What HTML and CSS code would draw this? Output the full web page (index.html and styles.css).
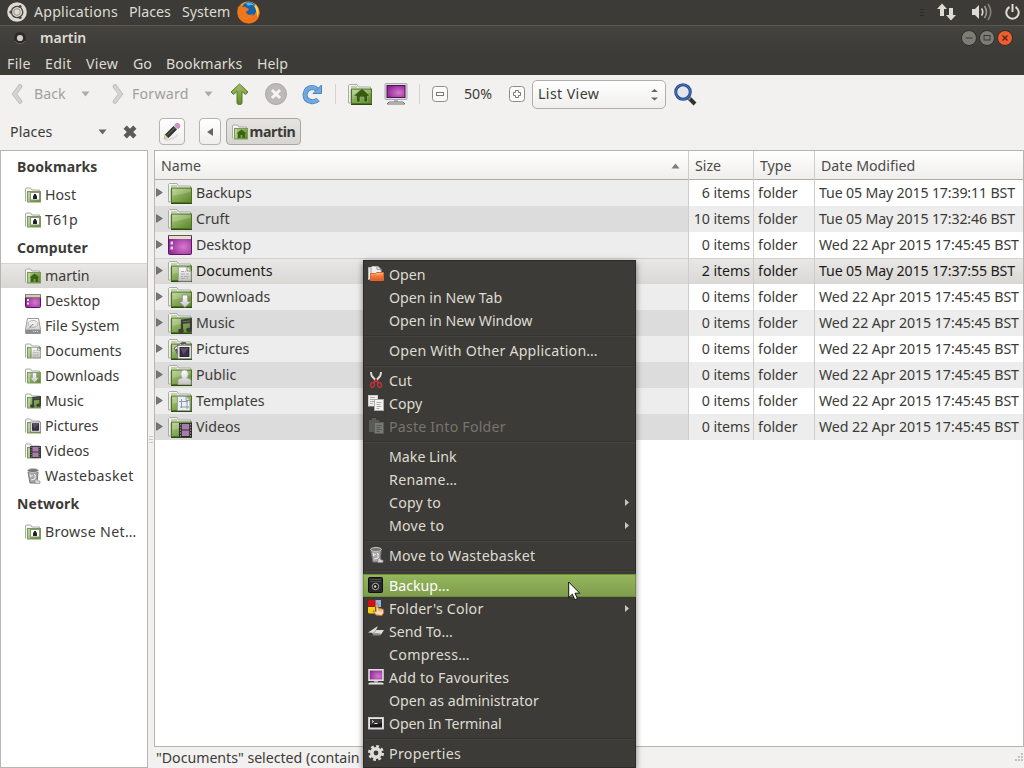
FILE: index.html
```html
<!DOCTYPE html>
<html lang="en">
<head>
<meta charset="utf-8">
<title>martin</title>
<link rel="stylesheet" href="styles.css">
</head>
<body>
<svg class="defs" width="0" height="0" aria-hidden="true">
  <defs>
    <linearGradient id="gGreen" x1="0" y1="0" x2="1" y2="1"><stop offset="0" stop-color="#b4cf86"/><stop offset=".5" stop-color="#83a754"/><stop offset="1" stop-color="#5a8528"/></linearGradient>
    <linearGradient id="gArrow" x1="0" y1="0" x2="0" y2="1"><stop offset="0" stop-color="#a5bf6b"/><stop offset="1" stop-color="#5d8c23"/></linearGradient>
    <radialGradient id="gPurple" cx=".65" cy=".6" r=".7"><stop offset="0" stop-color="#d879cd"/><stop offset="1" stop-color="#8a2492"/></radialGradient>
    <linearGradient id="gGrey" x1="0" y1="0" x2="0" y2="1"><stop offset="0" stop-color="#fff"/><stop offset="1" stop-color="#c4c4c4"/></linearGradient>
    <linearGradient id="gOrange" x1="0" y1="0" x2="0" y2="1"><stop offset="0" stop-color="#f7c39c"/><stop offset=".4" stop-color="#ef8143"/><stop offset="1" stop-color="#e4581c"/></linearGradient>
    <radialGradient id="gFox" cx=".4" cy=".3" r=".8"><stop offset="0" stop-color="#ffc43a"/><stop offset=".55" stop-color="#f5871f"/><stop offset="1" stop-color="#d8331a"/></radialGradient>
  </defs>
  <symbol id="folder24" viewBox="0 0 24 24">
    <path d="M.5 21V3.500l1-1H9l1.500 2.500H22.500V8H3v13z" fill="#f2f2f0" stroke="#a9aba6"/>
    <path d="M3 5h6" stroke="#91b45f"/>
    <rect x="3.500" y="7" width="20" height="14.500" fill="url(#gGreen)" stroke="#4c7420"/>
    <path d="M4.500 8h18v3C15 12 10 14 4.500 15z" fill="#fff" opacity=".2"/>
    <path d="M3 22.500h21" stroke="#2f4b10"/>
  </symbol>
  <symbol id="folder16" viewBox="0 0 16 16">
    <path d="M.5 14.500V1.500l.5-.5h4.500L7 3h7.500v3" fill="#f4f4f2" stroke="#a9aba6"/>
    <rect x="2.500" y="4.500" width="13" height="10.500" fill="url(#gGreen)" stroke="#7c9a57"/>
    <path d="M4 5.500v9" stroke="#d6e3c1"/>
  </symbol>
  <symbol id="netfolder" viewBox="0 0 16 16"><use href="#folder16"/><rect x="5.500" y="5.500" width="9" height="7.500" fill="#fafafa" stroke="#8a947c"/><path d="M8 8.500h1V7h2v1.500h1V12H8z" fill="#222"/></symbol>
  <symbol id="home16" viewBox="0 0 16 16"><use href="#folder16"/><path d="M4.500 9.500L9.500 5.500l5 4H13V14h-2.500v-3H8.500v3H6V9.500z" fill="#3b6017"/></symbol>
  <symbol id="home24" viewBox="0 0 24 24"><use href="#folder24"/><path d="M5.500 14L14 6.500l8 7.500h-2.500v6H16v-5h-4v5H8.500v-6z" fill="#355a12" stroke="#9bb873" stroke-width=".6"/></symbol>
  <symbol id="desk24" viewBox="0 0 24 24"><rect x=".5" y="2.500" width="23" height="19" rx="1" fill="url(#gPurple)" stroke="#611268"/><rect x="1" y="3" width="22" height="3" fill="#e2dfc8"/><path d="M0 2.500h24" stroke="#5f5c49"/><rect x="2.500" y="8.500" width="2.500" height="3" fill="#ddd"/><rect x="2.500" y="13.500" width="2.500" height="3" fill="#ddd"/></symbol>
  <symbol id="desk16" viewBox="0 0 16 16"><rect x=".5" y="2" width="15" height="12.500" rx="1" fill="url(#gPurple)" stroke="#611268"/><rect x=".5" y="1.500" width="15" height="3" fill="#d0ceb5" stroke="#77745f" stroke-width=".7"/><rect x="2" y="6" width="2" height="2" fill="#eee"/><rect x="2" y="9.500" width="2" height="2" fill="#eee"/></symbol>
  <symbol id="eDoc" viewBox="0 0 14 15"><path d="M.5.500h8.500l4 4v10H.5z" fill="url(#gGrey)" stroke="#a9a9a9"/><path d="M9 .5v4h4" fill="#eee" stroke="#888"/><path d="M3 5h3M7 5h1M3 7.500h4m1 0h3M3 10h2m1 0h5M3 12h4m1 0h2" stroke="#aaa"/></symbol>
  <symbol id="eDown" viewBox="0 0 14 15"><path d="M4 1h6v7h3.500L7 14.500.5 8H4z" fill="url(#gGrey)" stroke="#8b8b8b"/></symbol>
  <symbol id="eMusic" viewBox="0 0 14 15"><path d="M4 12V2l9-1v10M4 4.500l9-1" fill="none" stroke="#3b3d3c" stroke-width="2.200"/><ellipse cx="3" cy="12.500" rx="2.800" ry="2.200" fill="#3b3d3c"/><ellipse cx="11" cy="11.500" rx="2.800" ry="2.200" fill="#3b3d3c"/></symbol>
  <symbol id="ePic" viewBox="0 0 14 15"><rect x=".7" y="1.200" width="12.600" height="12.600" fill="#f8f8f8" stroke="#777" stroke-width=".8"/><rect x="2.800" y="3.300" width="8.400" height="8.400" fill="#3a304b" stroke="#111" stroke-width=".8"/><path d="M3 3.500h8l-5 6z" fill="#73668c" opacity=".6"/></symbol>
  <symbol id="eUser" viewBox="0 0 14 15"><path d="M1 14.500V11q0-2 4-2.500Q3.500 7 3.500 4.500 3.500 1 7 1t3.500 3.500Q10.500 7 9 8.500q4 .5 4 2.500v3.500z" fill="url(#gGrey)" stroke="#aaa" stroke-width=".8"/></symbol>
  <symbol id="eTemplate" viewBox="0 0 14 15"><path d="M.5.500h8.500l4 4v10H.5z" fill="#edf0f2" stroke="#9aa3ab"/><path d="M4.500 3v9M10 6v7M2 5.500h9M3 11h9M9 .5v4h4" fill="none" stroke="#8e9aa8"/></symbol>
  <symbol id="eFilm" viewBox="0 0 14 15"><rect x="0" y="0" width="14" height="15" fill="#29262b"/><rect x="3" y="1" width="8" height="6" fill="#a87caa"/><rect x="3" y="8" width="8" height="6" fill="#a87caa"/><path d="M1.500 1v14M12.500 1v14" stroke="#aaa" stroke-dasharray="1.500 1.500"/></symbol>
  <symbol id="disk" viewBox="0 0 16 16"><path d="M2.500.500h11l2 11v4H.5v-4z" fill="url(#gGrey)" stroke="#999"/><ellipse cx="8" cy="6" rx="5" ry="3.500" fill="none" stroke="#b5b5b5"/><path d="M8 6L4 10.500" stroke="#888"/><rect x="1" y="11.500" width="14" height="4" fill="#8c8c8c"/><path d="M8 13.500h5" stroke="#ddd" stroke-dasharray="1 1"/></symbol>
  <symbol id="trash" viewBox="0 0 16 16"><path d="M3 4h10l-1 11H5z" fill="#a5a5a5" stroke="#777"/><ellipse cx="8" cy="2.500" rx="5.500" ry="2" fill="#777" stroke="#c4c4c4"/><path d="M5 6l1 3m-1 0l3-2m2 0v4M6 12l4-1M9 6l2 2" stroke="#eee" fill="none"/><path d="M10 15.500V12l2-1 1 2h2v2.500z" fill="#d5d5d5" stroke="#888" stroke-width=".6"/></symbol>
  <symbol id="monitor" viewBox="0 0 24 24"><rect x="1" y="1.500" width="22" height="16" rx="1" fill="#dcdcdc" stroke="#aaa"/><rect x="3" y="3.500" width="18" height="12" fill="url(#gPurple)" stroke="#4f1259"/><path d="M10 18h4v3h-4z" fill="#bbb"/><path d="M3 22l2-2h14l2 2z" fill="#eee" stroke="#6e6e6e"/></symbol>
  <symbol id="monitor16" viewBox="0 0 16 16"><rect x="1" y=".8" width="14" height="10.400" fill="url(#gPurple)" stroke="#dedede" stroke-width="1.600"/><path d="M6 12h4v1.500H6z" fill="#aaa"/><path d="M.5 15.500v-1.300l1.500-.7h12l1.500.7v1.300z" fill="#e6e6e6"/></symbol>
  <symbol id="openIc" viewBox="0 0 16 16"><path d="M.5 14V1.500H3l1-1h6l3 3V7" fill="#eee" stroke="#bbb"/><path d="M3 2v10M9 .5v3h4" stroke="#999" fill="none"/><path d="M2.500 7.500h5l1-1h7v8h-13z" fill="url(#gOrange)" stroke="#e0642b"/></symbol>
  <symbol id="cutIc" viewBox="0 0 16 16"><path d="M2.800 0L3.800 4 8.700 9.500M13.200 0l-1 4-4.900 5.500" fill="none" stroke="#dededa" stroke-width="1.900"/><path d="M5.500 10.500L8 8l2.500 2.500" fill="none" stroke="#b82d36" stroke-width="2"/><ellipse cx="4.500" cy="13" rx="1.900" ry="2.400" transform="rotate(20 4.500 13)" fill="none" stroke="#c1333a" stroke-width="1.500"/><ellipse cx="11.500" cy="13" rx="1.900" ry="2.400" transform="rotate(-20 11.500 13)" fill="none" stroke="#c1333a" stroke-width="1.500"/></symbol>
  <symbol id="copyIc" viewBox="0 0 16 16"><rect x=".5" y=".5" width="9" height="10.500" fill="#f3f3f1" stroke="#ccc"/><path d="M2 2.500h5M2 4.500h4M2 6.500h4M2 8.500h3" stroke="#aaa"/><rect x="6.500" y="4.500" width="9" height="11" fill="#f5f5f3" stroke="#aaa"/><path d="M8.500 7.500h5M8.500 9.500h4M8.500 11.500h5M8.500 13.500h3" stroke="#aaa"/></symbol>
  <symbol id="pasteIc" viewBox="0 0 16 16"><path d="M1 2h3V0h4v2h3v12H1z" fill="#5a5a56"/><rect x="6.500" y="4.500" width="9" height="11" fill="#797976" stroke="#5a5a56"/><path d="M8.500 7.500h5M8.500 9.500h4M8.500 11.500h5M8.500 13.500h3" stroke="#555"/></symbol>
  <symbol id="safe" viewBox="0 0 16 16"><rect x=".5" y=".5" width="14" height="15" rx="1" fill="#282828" stroke="#0e0e0e"/><path d="M2 2.500h11M2 4.500h11" stroke="#4b4b4b"/><circle cx="7.500" cy="9.500" r="3.200" fill="#111" stroke="#b5b5b5"/><circle cx="7.200" cy="9.500" r="1.200" fill="#ddd"/></symbol>
  <symbol id="colorIc" viewBox="0 0 16 16"><path d="M1 0h6v6.500H0V1z" fill="#d80f10"/><path d="M7.500 0H13v7H7.500z" fill="#8fb5e6"/><path d="M0 7h7v6.500H1l-1-1z" fill="#f4d211"/><path d="M8 15l-3-4h1.500L8 12V4h2v4l4.500 1 1 1v3l-1.500 2.500z" fill="#f6dcb9" stroke="#bd7730"/><path d="M11 9v2m2-1.500v2" stroke="#bd7730" stroke-width=".8"/></symbol>
  <symbol id="sendIc" viewBox="0 0 16 16"><path d="M0 9.500L10 3 8 7h8l-3 4.500H5.500L4 9.800z" fill="#deded9"/><path d="M8.500 7L5 10.300l7.500.5" stroke="#999" fill="none"/><path d="M4.500 12h8" stroke="#8b8b86"/></symbol>
  <symbol id="termIc" viewBox="0 0 16 16"><rect x=".5" y="2.500" width="15" height="11.500" fill="#e4e4e2" stroke="#ccc"/><rect x="2" y="4" width="12" height="8.500" fill="#171717"/><path d="M2 4h12v4L2 10z" fill="#4a4a4a" opacity=".7"/><path d="M4 5.500L5.500 6.500 4 7.500M6.500 8.500h3" stroke="#eee" fill="none"/></symbol>
  <symbol id="gear" viewBox="0 0 16 16"><circle cx="8" cy="8" r="6.600" fill="none" stroke="#dededb" stroke-width="2.800" stroke-dasharray="2.800 2.380"/><circle cx="8" cy="8" r="4.200" fill="#3c3b37" stroke="#dededb" stroke-width="3.600"/></symbol>
  <symbol id="tri" viewBox="0 0 9 6"><path d="M.5.500h8L4.500 5.500z"/></symbol>
  <symbol id="exp" viewBox="0 0 7 9"><path d="M.5.700L6.300 4.500.5 8.300z" fill="#777" stroke="#5f5f5f" stroke-width=".8"/></symbol>
  <symbol id="sub" viewBox="0 0 4 7"><path d="M0 0l4 3.500L0 7z" fill="#c8c7c1"/></symbol>
</svg>

<header class="panel">
  <svg class="distro" viewBox="0 0 20 20"><circle cx="10" cy="10" r="9.800" fill="#dfdbd2"/><circle cx="10" cy="10" r="5.600" fill="none" stroke="#45443f" stroke-width="1.300" stroke-dasharray="10 1.730" transform="rotate(67 10 10)"/><circle cx="3.800" cy="10" r="1.500" fill="#45443f"/><circle cx="13.100" cy="4.600" r="1.500" fill="#45443f"/><circle cx="13.100" cy="15.400" r="1.500" fill="#45443f"/><circle cx="10" cy="10" r="3.300" fill="none" stroke="#77756f" stroke-width=".8"/></svg>
  <span class="p-app">Applications</span><span class="p-places">Places</span><span class="p-system">System</span>
  <svg class="fox" viewBox="0 0 23 23"><circle cx="11.500" cy="11.500" r="11" fill="url(#gFox)"/><circle cx="12" cy="8.500" r="7.500" fill="#1563b0"/><path d="M9 2q5-2 9 3-4-2-7 0z" fill="#48b7e8"/><path d="M1 6q2-1 3-3l1 3q3-1 5 1l2 1q-1 2-3 2.500 0 2 2 3 3 1 5-1 0 4-4 5-5 0-7-3Q6 22 15 19q5-2 5-9l-1-5q4 3 3.500 8-1.500 9-11 9.500Q1 21 .5 12q0-4 .5-6z" fill="#f0761c"/><path d="M19 4q5 6 1 12 0-7-3-11z" fill="#ffd646"/></svg>
  <div class="tray">
    <i class="grip"><b></b><b></b><b></b></i>
    <svg class="net" viewBox="0 0 19 18"><path d="M5 .5L10 6H7v7H3V6H0zM14 17.500L9 12h3V5h4v7h3z" fill="#dfdbd2"/></svg>
    <svg class="vol" viewBox="0 0 21 18"><path d="M0 6h3l4-4v14l-4-4H0z" fill="#dfdbd2"/><g fill="none" stroke="#dfdbd2" stroke-width="1.600"><path d="M9.500 5.500q2.500 3.500 0 7"/><path d="M12.500 3q4 6 0 12" opacity=".6"/><path d="M16 1q5.500 8 0 16" opacity=".45"/></g></svg>
    <svg class="pow" viewBox="0 0 15 16"><path d="M4.500 3A6.200 6.200 0 1 0 10.500 3" fill="none" stroke="#dfdbd2" stroke-width="2"/><path d="M7.500 0v8" stroke="#dfdbd2" stroke-width="2"/></svg>
  </div>
</header>

<div class="titlebar">
  <svg class="winicon" viewBox="0 0 14 14"><circle cx="7" cy="7" r="6" fill="#2b2a27"/><path d="M2 10a6 6 0 0 0 10 0" fill="none" stroke="#67665f"/><circle cx="7" cy="7" r="3.100" fill="#cfcdc6"/></svg>
  <span class="wintitle">martin</span>
  <div class="winbtns">
    <svg viewBox="0 0 16 16"><circle cx="8" cy="8" r="7.500" fill="#7d7c75" stroke="#302f2c"/><path d="M4.500 8h7" stroke="#3a3935"/></svg>
    <svg viewBox="0 0 16 16"><circle cx="8" cy="8" r="7.500" fill="#7d7c75" stroke="#302f2c"/><rect x="5" y="5.500" width="6" height="4.500" fill="none" stroke="#3a3935"/></svg>
    <svg viewBox="0 0 16 16"><circle cx="8" cy="8" r="7.500" fill="#ee5d2d" stroke="#302f2c"/><path d="M5.500 5.500l5 5m0-5l-5 5" stroke="#55230f" stroke-width="1.300"/></svg>
  </div>
</div>

<nav class="menubar"><span class="m-file">File</span><span class="m-edit">Edit</span><span class="m-view">View</span><span class="m-go">Go</span><span class="m-bm">Bookmarks</span><span class="m-help">Help</span></nav>

<div class="toolbar">
  <svg class="chev" viewBox="0 0 12 20"><path d="M9 2.500L3.500 10 9 17.500" fill="none" stroke="#b9bab6" stroke-width="4.500" stroke-linecap="round"/><path d="M9 2.500L3.500 10 9 17.500" fill="none" stroke="#d3d4d1" stroke-width="3" stroke-linecap="round"/></svg>
  <span class="t-back">Back</span><svg class="tri pale"><use href="#tri"/></svg>
  <svg class="chev fwd" viewBox="0 0 12 20"><path d="M3 2.500L8.500 10 3 17.500" fill="none" stroke="#b9bab6" stroke-width="4.500" stroke-linecap="round"/><path d="M3 2.500L8.500 10 3 17.500" fill="none" stroke="#d3d4d1" stroke-width="3" stroke-linecap="round"/></svg>
  <span class="t-fwd">Forward</span><svg class="tri pale"><use href="#tri"/></svg>
  <svg class="up" viewBox="0 0 19 22"><path d="M9.500 1l8.500 8-2.500 2.500-3.500-3V20q0 1.500-2.500 1.500T7 20V8.500l-3.500 3L1 9z" fill="url(#gArrow)" stroke="#557c25"/></svg>
  <svg class="stop" viewBox="0 0 22 22"><circle cx="11" cy="11" r="10.500" fill="#bdb9b9" stroke="#aaa6a6"/><path d="M7 7l8 8m0-8l-8 8" stroke="#f5f4f4" stroke-width="3"/></svg>
  <svg class="reload" viewBox="0 0 21 21"><path d="M16 15.500Q13 18.500 9 17.500 3 16.500 3 10.500 4 4 10 3.500q3 0 5 2" fill="none" stroke="#4c82bd" stroke-width="5"/><path d="M16 15.500Q13 18.500 9 17.500 3 16.500 3 10.500 4 4 10 3.500q3 0 5 2" fill="none" stroke="#70a9df" stroke-width="3.300"/><path d="M19.500 1v8.500H11L13.500 7l3-3z" fill="#70a9df" stroke="#4c82bd"/></svg>
  <i class="sep"></i>
  <svg class="i24 homebtn"><use href="#home24"/></svg>
  <svg class="i24 pcbtn"><use href="#monitor"/></svg>
  <i class="sep s2"></i>
  <svg class="zoomer" viewBox="0 0 16 16"><rect x=".5" y=".5" width="15" height="15" rx="3" fill="#fafafa" stroke="#8e8d89"/><rect x="4.500" y="6.500" width="7" height="3" fill="#fff" stroke="#777"/></svg>
  <span class="t-zoom">50%</span>
  <svg class="zoomer" viewBox="0 0 16 16"><rect x=".5" y=".5" width="15" height="15" rx="3" fill="#fafafa" stroke="#8e8d89"/><path d="M6.500 4.500h3v2h2v3h-2v2h-3v-2h-2v-3h2z" fill="#fff" stroke="#777"/></svg>
  <div class="select"><span class="t-list">List View</span><svg viewBox="0 0 7 13"><path d="M0 4L3.500 1 7 4zM0 9.500l3.500 3L7 9.500z" fill="#666"/></svg></div>
  <svg class="mag" viewBox="0 0 23 23"><path d="M14 14l7 7" stroke="#333" stroke-width="4"/><path d="M14 14l2 2" stroke="#aaa" stroke-width="3"/><circle cx="9" cy="9" r="7.300" fill="#e3e7ec" stroke="#25478b" stroke-width="3"/><circle cx="9" cy="9" r="7.300" fill="none" stroke="#557dc5" stroke-width="1"/></svg>
</div>

<div class="location">
  <span class="t-side">Places</span><svg class="tri dark"><use href="#tri"/></svg>
  <svg class="closeside" viewBox="0 0 13 13"><path d="M2 2l9 9m0-9l-9 9" stroke="#5b5a56" stroke-width="4.200"/></svg>
  <div class="btn pencil"><svg viewBox="0 0 18 18"><path d="M2 17q7 0 13-5" stroke="#ddd" stroke-width="2" fill="none"/><path d="M1 16l1-4.500L5 14.500z" fill="#e9e18b" stroke="#99975d" stroke-width=".5"/><path d="M2 11.500L10.500 3 14 6.500 5.500 15z" fill="#333"/><path d="M4 12.500L12 4.500" stroke="#777"/><path d="M10.500 3l1.300-1.300 3.500 3.500L14 6.500z" fill="#bbb"/><path d="M12 1.500Q14-.5 16 1t0 4l-.5.500z" fill="#e292cc" stroke="#a75e95" stroke-width=".5"/></svg></div>
  <div class="btn prev"><svg viewBox="0 0 6 8"><path d="M6 0v8L0 4z" fill="#666"/></svg></div>
  <div class="btn crumb"><svg class="i16"><use href="#home16"/></svg><b>martin</b></div>
</div>

<main class="body">
  <aside class="side">
    <h2>Bookmarks</h2>
    <p><svg><use href="#netfolder"/></svg><span>Host</span></p>
    <p><svg><use href="#netfolder"/></svg><span>T61p</span></p>
    <h2>Computer</h2>
    <p class="sel"><svg><use href="#home16"/></svg><span>martin</span></p>
    <p><svg><use href="#desk16"/></svg><span>Desktop</span></p>
    <p><svg><use href="#disk"/></svg><span>File System</span></p>
    <p><svg><use href="#folder16"/><use href="#eDoc" x="6" y="4" width="10" height="11"/></svg><span>Documents</span></p>
    <p><svg><use href="#folder16"/><use href="#eDown" x="4" y="4" width="11" height="11"/></svg><span>Downloads</span></p>
    <p><svg><use href="#folder16"/><use href="#eMusic" x="5" y="3" width="11" height="12"/></svg><span>Music</span></p>
    <p><svg><use href="#folder16"/><use href="#ePic" x="5" y="3" width="11" height="12"/></svg><span>Pictures</span></p>
    <p><svg><use href="#folder16"/><use href="#eFilm" x="5" y="3" width="11" height="12"/></svg><span>Videos</span></p>
    <p><svg><use href="#trash"/></svg><span class="airy">Wastebasket</span></p>
    <h2>Network</h2>
    <p><svg><use href="#netfolder"/></svg><span class="airy">Browse Net…</span></p>
  </aside>
  <div class="handle"><i></i><i></i><i></i></div>
  <section class="right">
    <div class="list">
      <div class="row head"><span class="c-name">Name<svg viewBox="0 0 9 6"><path d="M.5 5.500h8L4.500.500z" fill="#7d7d7d"/></svg></span><span>Size</span><span>Type</span><span>Date Modified</span></div>
      <div class="row"><div class="c-name"><svg class="exp"><use href="#exp"/></svg><svg class="i24"><use href="#folder24"/></svg><span>Backups</span></div><div class="c-size">6 items</div><div class="c-type">folder</div><div class="c-date tue">Tue 05 May 2015 17:39:11 BST</div></div>
      <div class="row"><div class="c-name"><svg class="exp"><use href="#exp"/></svg><svg class="i24"><use href="#folder24"/></svg><span>Cruft</span></div><div class="c-size">10 items</div><div class="c-type">folder</div><div class="c-date tue">Tue 05 May 2015 17:32:46 BST</div></div>
      <div class="row"><div class="c-name"><svg class="exp"><use href="#exp"/></svg><svg class="i24"><use href="#desk24"/></svg><span>Desktop</span></div><div class="c-size">0 items</div><div class="c-type">folder</div><div class="c-date">Wed 22 Apr 2015 17:45:45 BST</div></div>
      <div class="row chosen"><div class="c-name"><svg class="exp"><use href="#exp"/></svg><svg class="i24"><use href="#folder24"/><use href="#eDoc" x="10" y="7" width="14" height="16"/></svg><span>Documents</span></div><div class="c-size">2 items</div><div class="c-type">folder</div><div class="c-date tue">Tue 05 May 2015 17:37:55 BST</div></div>
      <div class="row"><div class="c-name"><svg class="exp"><use href="#exp"/></svg><svg class="i24"><use href="#folder24"/><use href="#eDown" x="10" y="9" width="14" height="14"/></svg><span>Downloads</span></div><div class="c-size">0 items</div><div class="c-type">folder</div><div class="c-date">Wed 22 Apr 2015 17:45:45 BST</div></div>
      <div class="row"><div class="c-name"><svg class="exp"><use href="#exp"/></svg><svg class="i24"><use href="#folder24"/><use href="#eMusic" x="10" y="7" width="14" height="16"/></svg><span>Music</span></div><div class="c-size">0 items</div><div class="c-type">folder</div><div class="c-date">Wed 22 Apr 2015 17:45:45 BST</div></div>
      <div class="row"><div class="c-name"><svg class="exp"><use href="#exp"/></svg><svg class="i24"><use href="#folder24"/><path d="M6 11l9-6 6 5-10 10z" fill="#eee" stroke="#666"/><path d="M8 12l3 5M13 7l5-1" stroke="#555" stroke-width="2"/><use href="#ePic" x="9" y="7" width="15" height="16"/></svg><span>Pictures</span></div><div class="c-size">0 items</div><div class="c-type">folder</div><div class="c-date">Wed 22 Apr 2015 17:45:45 BST</div></div>
      <div class="row"><div class="c-name"><svg class="exp"><use href="#exp"/></svg><svg class="i24"><use href="#folder24"/><use href="#eUser" x="9" y="6" width="15" height="16"/></svg><span>Public</span></div><div class="c-size">0 items</div><div class="c-type">folder</div><div class="c-date">Wed 22 Apr 2015 17:45:45 BST</div></div>
      <div class="row"><div class="c-name"><svg class="exp"><use href="#exp"/></svg><svg class="i24"><use href="#folder24"/><use href="#eTemplate" x="9" y="7" width="14" height="15"/></svg><span>Templates</span></div><div class="c-size">0 items</div><div class="c-type">folder</div><div class="c-date">Wed 22 Apr 2015 17:45:45 BST</div></div>
      <div class="row"><div class="c-name"><svg class="exp"><use href="#exp"/></svg><svg class="i24"><use href="#folder24"/><use href="#eFilm" x="11" y="7" width="13" height="16"/></svg><span>Videos</span></div><div class="c-size">0 items</div><div class="c-type">folder</div><div class="c-date">Wed 22 Apr 2015 17:45:45 BST</div></div>
    </div>
    <footer class="status"><span>"Documents" selected (contain</span><svg viewBox="0 0 12 12"><path d="M10 1v2M10 4v2M10 7v2M7 4v2M7 7v2M4 7v2" stroke="#c4c2bd" stroke-width="2"/></svg></footer>
  </section>
</main>

<div class="menu">
  <div class="mi"><svg><use href="#openIc"/></svg><span>Open</span></div>
  <div class="mi"><span>Open in New Tab</span></div>
  <div class="mi"><span>Open in New Window</span></div>
  <hr>
  <div class="mi"><span class="loose">Open With Other Application…</span></div>
  <hr>
  <div class="mi"><svg><use href="#cutIc"/></svg><span>Cut</span></div>
  <div class="mi"><svg><use href="#copyIc"/></svg><span>Copy</span></div>
  <div class="mi off"><svg><use href="#pasteIc"/></svg><span class="loose">Paste Into Folder</span></div>
  <hr>
  <div class="mi"><span>Make Link</span></div>
  <div class="mi"><span class="airy">Rename…</span></div>
  <div class="mi"><span class="loose">Copy to</span><svg class="sub"><use href="#sub"/></svg></div>
  <div class="mi"><span class="loose">Move to</span><svg class="sub"><use href="#sub"/></svg></div>
  <hr>
  <div class="mi"><svg><use href="#trash"/></svg><span class="loose">Move to Wastebasket</span></div>
  <hr>
  <div class="mi hot"><svg><use href="#safe"/></svg><span>Backup...</span></div>
  <div class="mi"><svg><use href="#colorIc"/></svg><span class="loose">Folder's Color</span><svg class="sub"><use href="#sub"/></svg></div>
  <div class="mi"><svg><use href="#sendIc"/></svg><span>Send To...</span></div>
  <div class="mi"><span class="airy">Compress…</span></div>
  <div class="mi"><svg><use href="#monitor16"/></svg><span class="loose">Add to Favourites</span></div>
  <div class="mi"><span>Open as administrator</span></div>
  <div class="mi"><svg><use href="#termIc"/></svg><span class="snug">Open In Terminal</span></div>
  <hr>
  <div class="mi"><svg><use href="#gear"/></svg><span class="airy">Properties</span></div>
</div>
<svg class="cursor" viewBox="0 0 13 20"><path d="M.7 1v15.500l3.600-3.300 2.500 5.500 2.700-1.200L7 12.200h4.800z" fill="#fff" stroke="#111"/></svg>
</body>
</html>
```
FILE: styles.css
```css
* { box-sizing: border-box; margin: 0; padding: 0; }
html, body { height: 768px; overflow: hidden; }
body {
  width: 1024px;
  display: flex;
  flex-direction: column;
  background: #f2f1f0;
  color: #3c3b37;
  font: 14.2px/20px "Noto Sans", sans-serif;
  white-space: nowrap;
}
svg { flex: none; display: block; }
span { flex: none; }
.defs { position: absolute; }
.i24 { width: 24px; height: 24px; }
.i16 { width: 16px; height: 16px; }
.airy { letter-spacing: .33px; }
.loose { letter-spacing: .2px; }
.snug { letter-spacing: -.2px; }

.panel {
  flex: none;
  height: 25px;
  display: flex;
  align-items: center;
  padding: 0 4px 1px 7px;
  background: #3c3b37;
  color: #dfdbd2;
}
.distro { width: 20px; height: 20px; margin-right: 7px; }
.p-app { width: 95px; letter-spacing: .2px; }
.p-places { width: 53px; }
.p-system { width: 55px; }
.fox { width: 23px; height: 23px; }
.tray { margin-left: auto; display: flex; align-items: center; }
.grip { width: 4px; display: grid; gap: 2px; margin-right: 13px; }
.grip b { height: 1px; background: #2b2a27; }
.net { width: 19px; height: 18px; margin-right: 16px; }
.vol { width: 21px; height: 18px; margin-right: 12px; }
.pow { width: 15px; height: 16px; }

.titlebar {
  flex: none;
  height: 26px;
  display: flex;
  align-items: center;
  padding: 0 11px 2px 13px;
  border-top: 1px solid #5a5853;
  background: linear-gradient(#45443f, #3c3b37);
  color: #dfdbd2;
}
.winicon { width: 14px; height: 14px; margin-right: 13px; }
.wintitle { font-weight: 600; font-size: 14px; }
.winbtns { margin-left: auto; display: flex; gap: 2px; }
.winbtns svg { width: 16px; height: 16px; }

.menubar {
  flex: none;
  height: 24px;
  display: flex;
  align-items: center;
  padding: 1px 0 0 7px;
  background: #3c3b37;
  color: #dfdbd2;
}
.m-file { width: 38px; letter-spacing: .3px; }
.m-edit { width: 41px; letter-spacing: .3px; }
.m-view { width: 47px; letter-spacing: .3px; }
.m-go { width: 33px; }
.m-bm { width: 91px; letter-spacing: .1px; }

.toolbar { flex: none; height: 38px; display: flex; align-items: center; padding-left: 11px; }
.chev { width: 12px; height: 20px; margin-right: 11px; }
.chev.fwd { margin: 0 8px 0 22px; }
.t-back, .t-fwd { color: #a09f9b; }
.t-back { width: 47px; }
.t-fwd { width: 72px; letter-spacing: .2px; }
.tri { width: 9px; height: 6px; }
.pale { fill: #acaba8; }
.dark { fill: #666; }
.up { width: 19px; height: 22px; margin: 0 16px 0 17px; }
.stop { width: 22px; height: 22px; margin-right: 15px; }
.reload { width: 21px; height: 21px; }
.sep { width: 1px; height: 20px; background: #d5d3d0; margin: 0 12px; }
.pcbtn { margin-left: 12px; }
.s2 { margin: 0 12px 0 11px; }
.zoomer { width: 16px; height: 16px; }
.t-zoom { width: 45px; margin-left: 16px; }
.select {
  width: 134px;
  height: 29px;
  margin: 0 8px 0 7px;
  padding: 0 7px 0 5px;
  display: flex;
  align-items: center;
  justify-content: space-between;
  border: 1px solid #b0aeaa;
  border-radius: 5px;
  background: linear-gradient(#fff, #f0efed);
}
.t-list { letter-spacing: .4px; }
.select svg { width: 7px; height: 13px; }
.mag { width: 23px; height: 23px; }

.location { flex: none; height: 37px; display: flex; align-items: center; padding-left: 10px; }
.t-side { width: 88px; letter-spacing: .1px; }
.closeside { width: 14px; height: 14px; margin: 0 22px 0 16px; }
.btn {
  height: 27px;
  display: flex;
  align-items: center;
  justify-content: center;
  border: 1px solid #b5b3af;
  border-radius: 4px;
  background: linear-gradient(#fff, #efeeec);
}
.pencil { width: 26px; margin-right: 14px; }
.pencil svg { width: 18px; height: 18px; }
.prev { width: 22px; margin-right: 5px; }
.prev svg { width: 6px; height: 8px; }
.crumb { width: 75px; gap: 2px; background: linear-gradient(#e6e4e1, #d8d6d2); border-color: #aaa7a2; }
.crumb b { letter-spacing: -.4px; padding-top: 1px; }

.body { flex: 1; min-height: 0; display: flex; }
.side { flex: none; width: 148px; border: 1px solid #b8b5ae; background: #fff; }
.side h2 { height: 31px; padding-left: 16px; font-size: 14px; line-height: 31px; letter-spacing: .1px; }
.side p { height: 25px; display: flex; align-items: center; gap: 4px; padding-left: 24px; }
.side p svg { width: 16px; height: 16px; }
.side .sel { background: linear-gradient(#e9e8e6, #d9d7d4); box-shadow: inset 0 1px #d6d4d0; }
.handle { flex: none; width: 6px; display: grid; align-content: start; gap: 2px; padding: 286px 1px 0 0; justify-items: center; }
.handle i { width: 4px; height: 1px; background: #c9c7c3; }
.right { flex: 1; display: flex; flex-direction: column; }
.list { height: 597px; border: 1px solid #b8b5ae; background: #fff; }
.row { display: grid; grid-template-columns: 533px 65px 61px 1fr; height: 26px; line-height: 26px; }
.row > * + * { border-left: 1px solid #cfcdca; }
.row .c-name { display: flex; align-items: center; background: #ededed; }
.exp { width: 7px; height: 9px; margin: 0 5px 1px 1px; }
.c-name .i24 { margin-right: 4px; }
.c-size { text-align: right; padding-right: 3px; letter-spacing: -.05px; }
.c-type, .c-date { padding-left: 4px; }
.c-date { letter-spacing: -.06px; }
.c-date.tue { letter-spacing: -.16px; }
.row:nth-child(odd) { background: #ededed; }
.row:nth-child(odd) .c-name { background: #dcdcdc; }
.row.chosen, .row.chosen .c-name { background: linear-gradient(#e9e8e6, #dad8d5); color: #1c1b1a; }
.row.chosen > * { box-shadow: inset 0 1px #d2d0cc; }
.row.head {
  height: 29px;
  line-height: 29px;
  background: linear-gradient(#fff, #efeeec);
  border-bottom: 1px solid #aeaba0;
  color: #4c4b47;
}
.row.head > * { padding-left: 6px; }
.row.head .c-name { background: none; justify-content: space-between; padding-right: 8px; }
.head .c-name svg { width: 9px; height: 6px; }
.status { flex: 1; display: flex; align-items: center; padding: 1px 0 0 2px; letter-spacing: -.03px; }
.status svg { width: 12px; height: 12px; margin-left: auto; }

.menu {
  position: absolute;
  left: 363px;
  top: 260px;
  width: 273px;
  height: 508px;
  padding: 2px 0 0;
  border: 1px solid #2c2b28;
  background: #3c3b37;
  color: #dfdbd2;
  box-shadow: 0 2px 6px rgba(0, 0, 0, .5);
}
.mi { height: 23px; display: flex; align-items: center; padding: 0 6px 0 4px; }
.mi > svg { width: 16px; height: 16px; margin: 0 5px 2px 0; }
.mi > span:first-child { margin-left: 21px; }
.mi > .sub { width: 4px; height: 7px; margin: 0 0 0 auto; }
.mi.off { color: #77756d; }
.mi.hot { margin: 0 -1px; background: linear-gradient(#94b65c, #7f9d4c); color: #fff; border: 1px solid #6c8f35; padding: 0 6px 0 4px; }
.menu hr { border: 0; height: 7px; background: linear-gradient(#353430, #353430) 0 3px / 100% 1px no-repeat, linear-gradient(#43423d, #43423d) 0 4px / 100% 1px no-repeat; }
.cursor { position: absolute; left: 568px; top: 581px; width: 13px; height: 20px; }
```
